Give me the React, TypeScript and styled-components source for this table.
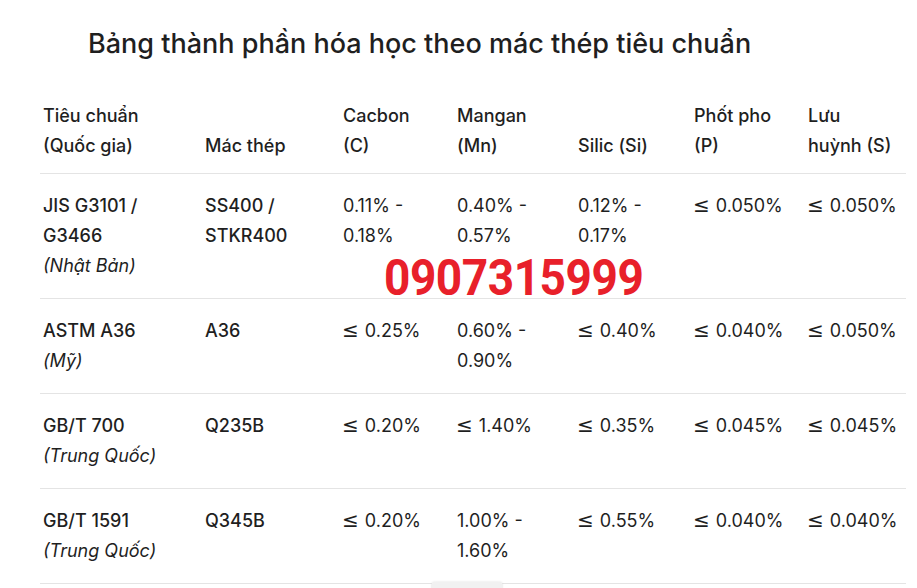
import React from "react";
import styled, { createGlobalStyle } from "styled-components";

const Global = createGlobalStyle`
  html, body { margin: 0; padding: 0; background: #ffffff; }
  body { font-family: "Inter", "Noto Sans", sans-serif; color: #1f1f1f; }
`;

const Page = styled.div`
  position: relative;
  width: 917px;
  height: 588px;
  overflow: hidden;
  background: #fff;
`;

const Title = styled.h1`
  margin: 0;
  padding: 26px 0 0 88px;
  font-size: 27px;
  line-height: 36px;
  font-weight: 500;
  color: #1f1f1f;
  white-space: nowrap;
`;

const Table = styled.div`
  margin: 27px 0 0 40px;
  width: 866px;
  display: grid;
  grid-template-columns: 162px 138px 114px 121px 116px 114px 1fr;
`;

const Row = styled.div<{ $head?: boolean }>`
  display: contents;
  & > div {
    padding: ${(p) => (p.$head ? "12px 0 12px 3px" : "17px 0 17px 3px")};
    justify-content: ${(p) => (p.$head ? "flex-end" : "flex-start")};
  }
`;

const Cell = styled.div<{ $bold?: boolean }>`
  display: flex;
  flex-direction: column;
  border-bottom: 1px solid #e4e4e4;
  font-size: 18px;
  line-height: 30px;
  color: #1f1f1f;
  font-weight: ${(p) => (p.$bold ? 500 : 400)};
  white-space: nowrap;
`;

const Line = styled.span``;

const Leq = styled.span`
  font-family: "DejaVu Sans", sans-serif;
  font-size: 20px;
  line-height: 0;
  font-weight: 400;
  margin-left: -1px;
  margin-right: 1px;
`;

const Country = styled.span`
  font-style: italic;
  font-weight: 400;
`;

const Watermark = styled.div`
  position: absolute;
  left: 384px;
  top: 250px;
  font-family: "Roboto", "Liberation Sans", sans-serif;
  font-weight: 700;
  font-size: 50px;
  line-height: 56px;
  color: #e8202a;
  transform: scaleX(0.92);
  transform-origin: left top;
  letter-spacing: -0.5px;
`;

const ScrollHint = styled.div`
  position: absolute;
  left: 431px;
  top: 582px;
  width: 72px;
  height: 8px;
  border-radius: 4px 4px 0 0;
  background: #f1f1f1;
  box-shadow: 0 -1px 2px rgba(0, 0, 0, 0.06);
`;

type R = { std: string[]; country: string; grade: string[]; vals: string[][] };

const rows: R[] = [
  {
    std: ["JIS G3101 /", "G3466"],
    country: "(Nhật Bản)",
    grade: ["SS400 /", "STKR400"],
    vals: [["0.11% -", "0.18%"], ["0.40% -", "0.57%"], ["0.12% -", "0.17%"], ["≤ 0.050%"], ["≤ 0.050%"]],
  },
  {
    std: ["ASTM A36"],
    country: "(Mỹ)",
    grade: ["A36"],
    vals: [["≤ 0.25%"], ["0.60% -", "0.90%"], ["≤ 0.40%"], ["≤ 0.040%"], ["≤ 0.050%"]],
  },
  {
    std: ["GB/T 700"],
    country: "(Trung Quốc)",
    grade: ["Q235B"],
    vals: [["≤ 0.20%"], ["≤ 1.40%"], ["≤ 0.35%"], ["≤ 0.045%"], ["≤ 0.045%"]],
  },
  {
    std: ["GB/T 1591"],
    country: "(Trung Quốc)",
    grade: ["Q345B"],
    vals: [["≤ 0.20%"], ["1.00% -", "1.60%"], ["≤ 0.55%"], ["≤ 0.040%"], ["≤ 0.040%"]],
  },
];

const heads: string[][] = [
  ["Tiêu chuẩn", "(Quốc gia)"],
  ["Mác thép"],
  ["Cacbon", "(C)"],
  ["Mangan", "(Mn)"],
  ["Silic (Si)"],
  ["Phốt pho", "(P)"],
  ["Lưu", "huỳnh (S)"],
];

function ValueLine({ text }: { text: string }) {
  if (text.startsWith("≤ ")) {
    return (
      <Line>
        <Leq>≤</Leq> {text.slice(2)}
      </Line>
    );
  }
  return <Line>{text}</Line>;
}

export default function App() {
  return (
    <Page>
      <Global />
      <Title>Bảng thành phần hóa học theo mác thép tiêu chuẩn</Title>
      <Table>
        <Row $head>
          {heads.map((h, i) => (
            <Cell key={i} $bold>
              {h.map((l) => (
                <Line key={l}>{l}</Line>
              ))}
            </Cell>
          ))}
        </Row>
        {rows.map((r, ri) => (
          <Row key={ri}>
            <Cell $bold>
              {r.std.map((l) => (
                <Line key={l}>{l}</Line>
              ))}
              <Country>{r.country}</Country>
            </Cell>
            <Cell $bold>
              {r.grade.map((l) => (
                <Line key={l}>{l}</Line>
              ))}
            </Cell>
            {r.vals.map((v, i) => (
              <Cell key={i}>
                {v.map((l) => (
                  <ValueLine key={l} text={l} />
                ))}
              </Cell>
            ))}
          </Row>
        ))}
      </Table>
      <Watermark>0907315999</Watermark>
      <ScrollHint />
    </Page>
  );
}
